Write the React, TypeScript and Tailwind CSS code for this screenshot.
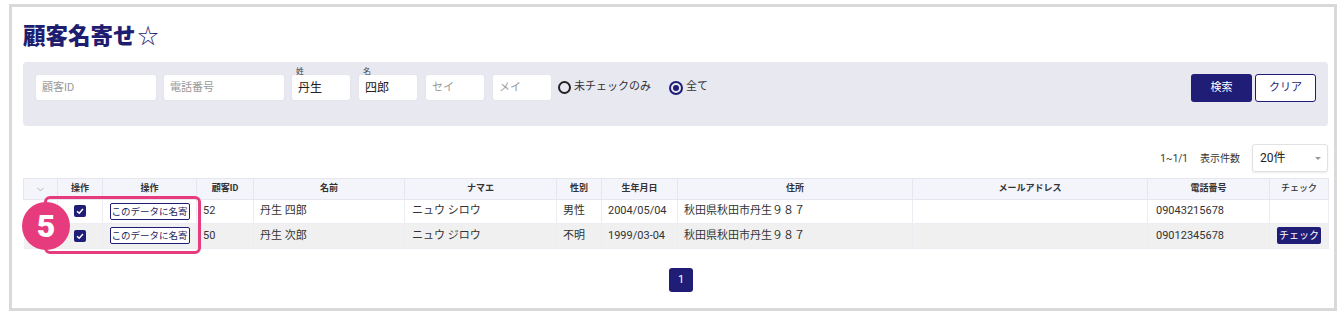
import React from "react";
import { ChevronDown } from "lucide-react";

const cols = [34, 45, 94, 57, 151, 152, 45, 76, 235, 235, 122, 59];

const rows = [
  { id: "52", name: "丹生 四郎", kana: "ニュウ シロウ", sex: "男性", birth: "2004/05/04", addr: "秋田県秋田市丹生９８７", tel: "09043215678", check: false },
  { id: "50", name: "丹生 次郎", kana: "ニュウ ジロウ", sex: "不明", birth: "1999/03-04", addr: "秋田県秋田市丹生９８７", tel: "09012345678", check: true },
];

function Field({ w, label, value, placeholder }: { w: string; label?: string; value?: string; placeholder?: string }) {
  return (
    <div className={`relative h-[25px] ${w} bg-white rounded-[2px] shadow-[0_0_1px_rgba(0,0,0,0.15)] flex items-center px-[6px]`}>
      {label && <span className="absolute left-[4px] -top-[8px] text-[8px] leading-[10px] text-[#444]">{label}</span>}
      {value ? (
        <span className="text-[12px] text-[#222] mt-[1px]">{value}</span>
      ) : (
        <span className="text-[11px] text-[#9a9a9a] mt-[2px]">{placeholder}</span>
      )}
    </div>
  );
}

function Check() {
  return (
    <span className="inline-flex w-[12px] h-[12px] bg-[#1f1d76] rounded-[2px] items-center justify-center">
      <svg width="10" height="10" viewBox="0 0 10 10">
        <path d="M2 5.2 L4.2 7.2 L8 3" stroke="white" strokeWidth="1.5" fill="none" />
      </svg>
    </span>
  );
}

export default function App() {
  return (
    <div className="w-[1342px] h-[316px] bg-white font-['Roboto','Noto_Sans_CJK_JP',sans-serif] text-[#333] pt-[4px] pl-[9px]">
      <div className="w-[1328px] h-[307px] border-[3px] border-[#d9d9d9] pl-[11px] pr-[6px] flex flex-col">
        {/* title */}
        <div className="pt-[13px] flex items-center h-[41px]">
          <h1 className="text-[22.5px] leading-[28px] font-black text-[#1f1d70] font-['Noto_Sans_CJK_JP',sans-serif]">顧客名寄せ</h1>
          <span className="text-[21px] leading-[28px] text-[#1f1d70] ml-[2px] font-['Noto_Sans_CJK_JP',sans-serif]">☆</span>
        </div>

        {/* search panel */}
        <div className="mt-[14px] h-[64px] bg-[#e8e8f1] rounded-[4px] flex items-start pt-[12px] pl-[13px] pr-[12px]">
          <div className="flex items-center gap-[8px] mt-[1px]">
            <Field w="w-[120px]" placeholder="顧客ID" />
            <Field w="w-[120px]" placeholder="電話番号" />
            <Field w="w-[58px]" label="姓" value="丹生" />
            <div className="ml-[1px]"><Field w="w-[58px]" label="名" value="四郎" /></div>
            <div className="ml-[1px]"><Field w="w-[58px]" placeholder="セイ" /></div>
            <div className="ml-[1px]"><Field w="w-[58px]" placeholder="メイ" /></div>
            <label className="flex items-center ml-[-1px]">
              <span className="w-[13px] h-[13px] rounded-full border-[2px] border-[#222]" />
              <span className="text-[11px] ml-[3px] text-[#333]">未チェックのみ</span>
            </label>
            <label className="flex items-center ml-[10px]">
              <span className="w-[14px] h-[14px] rounded-full border-[2px] border-[#1f1d76] flex items-center justify-center">
                <span className="w-[6px] h-[6px] rounded-full bg-[#1f1d76]" />
              </span>
              <span className="text-[11px] ml-[3px] text-[#333]">全て</span>
            </label>
          </div>
          <div className="ml-auto flex gap-[3px]">
            <button className="w-[61px] h-[28px] bg-[#1f1d76] text-white text-[11px] rounded-[3px]">検索</button>
            <button className="w-[61px] h-[28px] bg-white text-[#1f1d76] text-[11px] rounded-[3px] border border-[#1f1d76]">クリア</button>
          </div>
        </div>

        {/* info row */}
        <div className="mt-[18px] h-[28px] flex items-center justify-end">
          <span className="text-[10px] text-[#333]">1~1/1</span>
          <span className="text-[10px] text-[#333] ml-[12px]">表示件数</span>
          <div className="ml-[12px] w-[76px] h-[28px] bg-white border border-[#e2e2e2] rounded-[3px] shadow-[0_1px_2px_rgba(0,0,0,0.08)] flex items-center pl-[7px] pr-[6px]">
            <span className="text-[12px] text-[#222]">20件</span>
            <span className="ml-auto w-0 h-0 border-l-[3px] border-r-[3px] border-t-[3px] border-l-transparent border-r-transparent border-t-[#999]" />
          </div>
        </div>

        {/* table */}
        <div className="relative mt-[6px]">
          <table className="table-fixed border-collapse w-[1305px]">
            <colgroup>
              {cols.map((w, i) => (
                <col key={i} style={{ width: w }} />
              ))}
            </colgroup>
            <thead>
              <tr className="h-[21px] bg-[#f4f4fb] text-[9px] font-bold text-[#333]">
                <th className="border border-[#e6e6ee]">
                  <ChevronDown size={11} className="mx-auto text-[#999]" strokeWidth={1.5} />
                </th>
                <th className="border border-[#e6e6ee]">操作</th>
                <th className="border border-[#e6e6ee]">操作</th>
                <th className="border border-[#e6e6ee]">顧客ID</th>
                <th className="border border-[#e6e6ee]">名前</th>
                <th className="border border-[#e6e6ee]">ナマエ</th>
                <th className="border border-[#e6e6ee]">性別</th>
                <th className="border border-[#e6e6ee]">生年月日</th>
                <th className="border border-[#e6e6ee]">住所</th>
                <th className="border border-[#e6e6ee]">メールアドレス</th>
                <th className="border border-[#e6e6ee]">電話番号</th>
                <th className="border border-[#e6e6ee] font-medium">チェック</th>
              </tr>
            </thead>
            <tbody className="text-[11px] text-[#333]">
              {rows.map((r, i) => (
                <tr key={r.id} className={i === 0 ? "h-[24px] bg-white" : "h-[25px] bg-[#f0f0f0]"}>
                  <td className="border-y border-[#ececf2]" />
                  <td className="border border-[#ececf2] text-center">
                    <span className="inline-flex align-middle"><Check /></span>
                  </td>
                  <td className="border border-[#ececf2] text-center">
                    <button className="w-[80px] h-[17px] border border-[#1f1d76] bg-white text-[9.5px] text-[#1f1d5e] rounded-[2px] overflow-hidden whitespace-nowrap leading-[15px]">
                      このデータに名寄
                    </button>
                  </td>
                  <td className="border border-[#ececf2] pl-[6px]">{r.id}</td>
                  <td className="border border-[#ececf2] pl-[6px]">{r.name}</td>
                  <td className="border border-[#ececf2] pl-[7px]">{r.kana}</td>
                  <td className="border border-[#ececf2] pl-[6px]">{r.sex}</td>
                  <td className="border border-[#ececf2] pl-[6px]">{r.birth}</td>
                  <td className="border border-[#ececf2] pl-[6px]">{r.addr}</td>
                  <td className="border border-[#ececf2]" />
                  <td className="border border-[#ececf2] pl-[8px]">{r.tel}</td>
                  <td className="border border-[#ececf2] text-center">
                    {r.check && (
                      <button className="w-[44px] h-[17px] bg-[#1f1d76] text-white text-[10px] rounded-[2px] leading-[17px]">チェック</button>
                    )}
                  </td>
                </tr>
              ))}
            </tbody>
          </table>

          {/* annotation */}
          <div className="absolute left-[21px] top-[18px] w-[157px] h-[58px] border-[3px] border-[#e63b7c] rounded-[6px]" />
          <div className="absolute left-[-1px] top-[24px] w-[48px] h-[48px] rounded-full bg-[#e63b7c] flex items-center justify-center text-white text-[32px] font-black font-['Roboto',sans-serif]">
            5
          </div>
        </div>

        {/* pagination */}
        <div className="mt-[19px] flex justify-center pl-[11px]">
          <button className="w-[24px] h-[24px] bg-[#1f1d76] text-white text-[11px] rounded-[3px]">1</button>
        </div>
      </div>
    </div>
  );
}
